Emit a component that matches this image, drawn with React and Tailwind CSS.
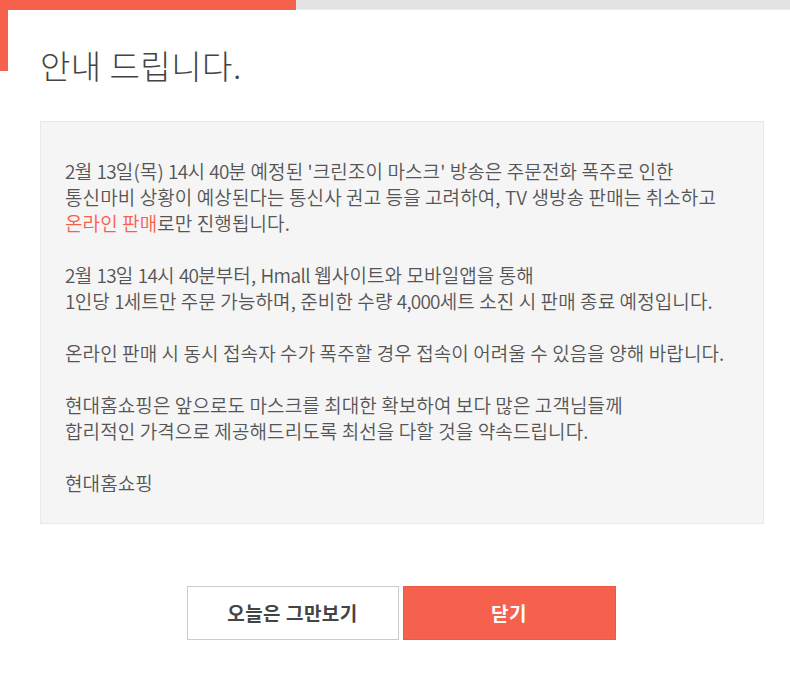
export default function App() {
  const font = { fontFamily: '"Noto Sans CJK KR", "Noto Sans", sans-serif' };
  return (
    <div className="relative w-[790px] h-[700px] bg-white" style={font}>
      <div className="flex h-[10px]">
        <div className="w-[296px] bg-[#f5614d]" />
        <div className="flex-1 bg-[#e3e3e3] border-b border-[#ececec]" />
      </div>
      <div className="absolute left-0 top-0 w-[8px] h-[71px] bg-[#f5614d]" />
      <div className="pl-[40px] pr-[26px]">
        <h1 className="mt-[33px] text-[33px] leading-[44px] font-light text-[#444] tracking-[0.5px]">안내 드립니다.</h1>
        <div className="mt-[34px] h-[403px] bg-[#f5f5f5] border border-[#e9e9e9] pt-[36px] pl-[24px] text-[19px] leading-[26px] text-[#555] font-[350] tracking-[0.1px] whitespace-nowrap">
          <p><span className="tracking-[-0.8px]">2</span>월 <span className="tracking-[-0.8px]">13</span>일(목) <span className="tracking-[-0.8px]">14</span>시 <span className="tracking-[-0.8px]">40</span>분 예정된 &#39;크린조이 마스크&#39; 방송은 주문전화 폭주로 인한</p>
          <p>통신마비 상황이 예상된다는 통신사 권고 등을 고려하여, TV 생방송 판매는 취소하고</p>
          <p><span className="text-[#f5614d]">온라인 판매</span>로만 진행됩니다.</p>
          <p className="mt-[26px]"><span className="tracking-[-0.8px]">2</span>월 <span className="tracking-[-0.8px]">13</span>일 <span className="tracking-[-0.8px]">14</span>시 <span className="tracking-[-0.8px]">40</span>분부터, <span className="tracking-[-0.6px]">Hmall</span> 웹사이트와 모바일앱을 통해</p>
          <p><span className="tracking-[-0.8px]">1</span>인당 <span className="tracking-[-0.8px]">1</span>세트만 주문 가능하며, 준비한 수량 <span className="tracking-[-0.8px]">4,000</span>세트 소진 시 판매 종료 예정입니다.</p>
          <p className="mt-[26px]">온라인 판매 시 동시 접속자 수가 폭주할 경우 접속이 어려울 수 있음을 양해 바랍니다.</p>
          <p className="mt-[26px]">현대홈쇼핑은 앞으로도 마스크를 최대한 확보하여 보다 많은 고객님들께</p>
          <p>합리적인 가격으로 제공해드리도록 최선을 다할 것을 약속드립니다.</p>
          <p className="mt-[26px]">현대홈쇼핑</p>
        </div>
        <div className="mt-[62px] mr-[2px] flex justify-center gap-[4px]">
          <button className="w-[212px] h-[54px] bg-white border border-[#cccccc] text-[19px] tracking-[0.5px] font-bold text-[#444]">오늘은 그만보기</button>
          <button className="w-[213px] h-[54px] bg-[#f5614d] border border-[#ea5a46] text-[19px] tracking-[0.5px] font-bold text-white">닫기</button>
        </div>
      </div>
    </div>
  );
}
